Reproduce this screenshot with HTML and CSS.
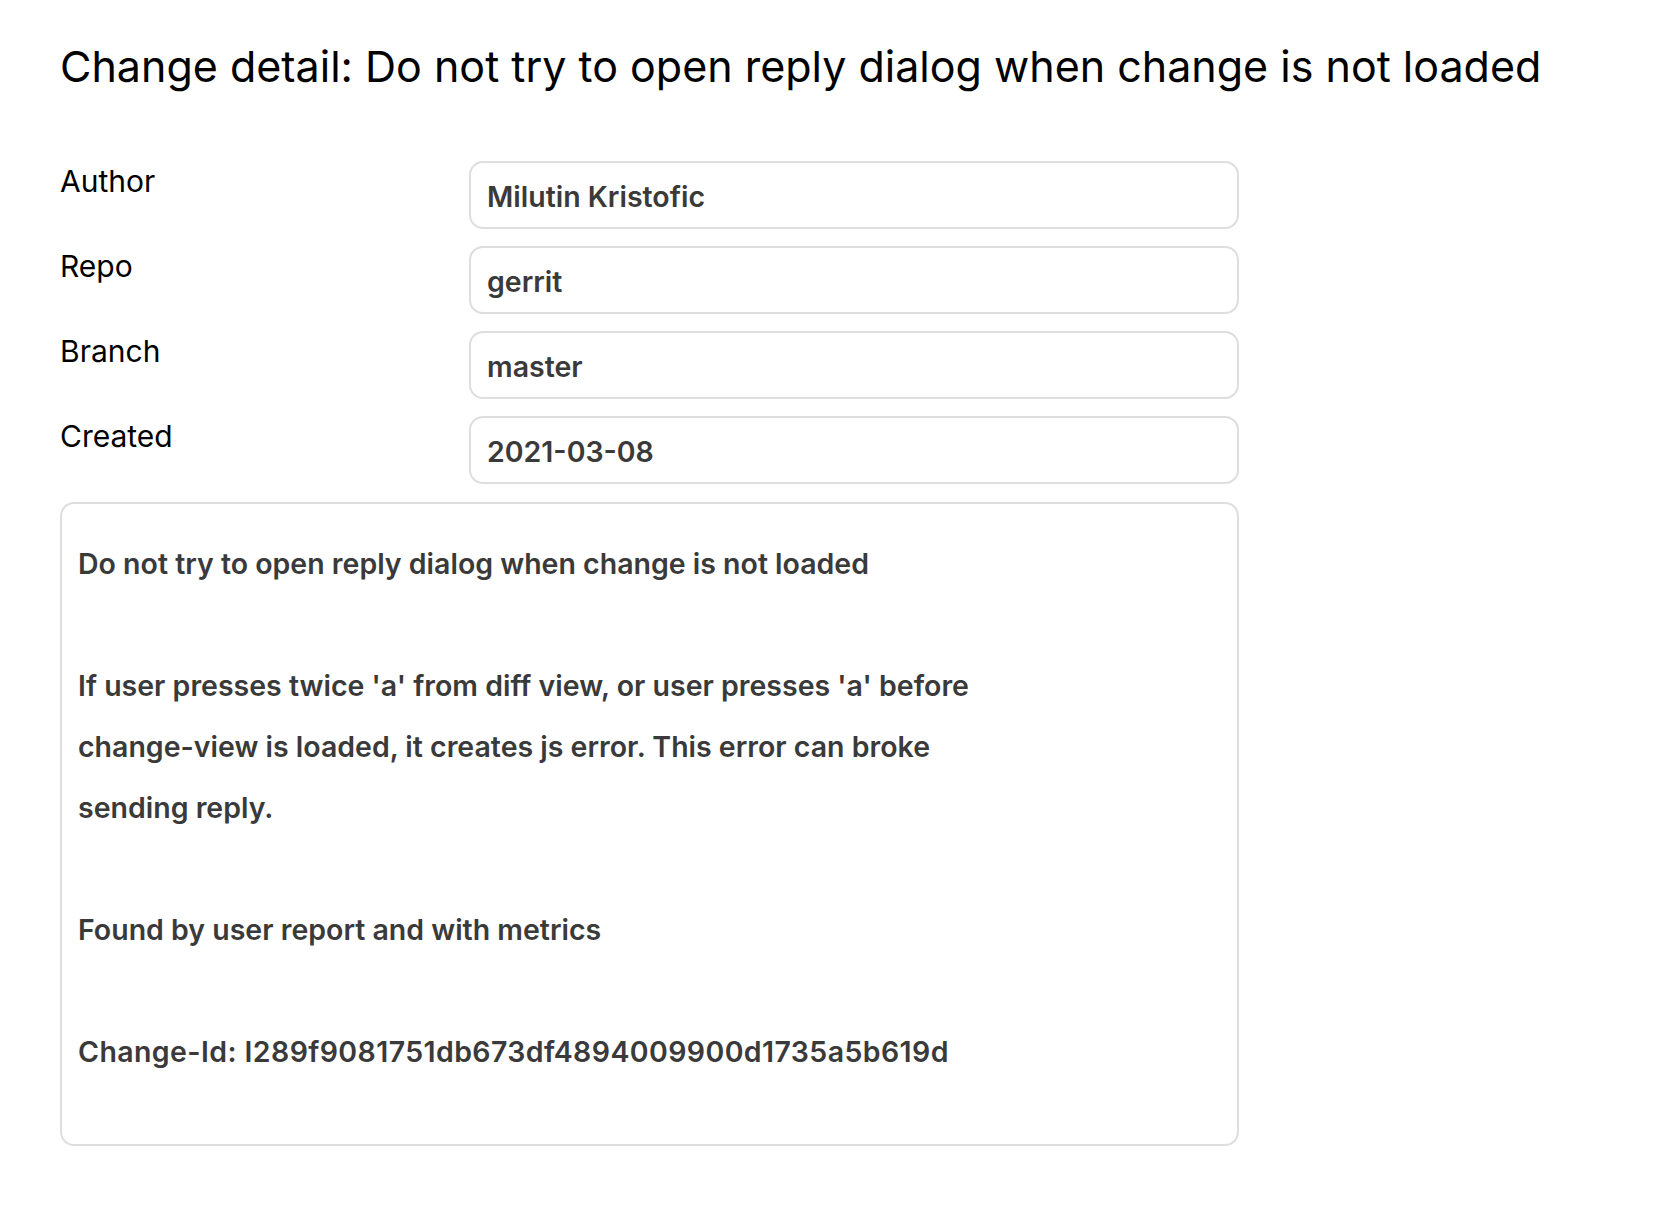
FILE: index.html
```html
<!DOCTYPE html>
<html lang="en">
<head>
<meta charset="utf-8">
<title>Change detail</title>
<link rel="stylesheet" href="styles.css">
</head>
<body>
<main class="page">
  <h1 class="title">Change detail: Do not try to open reply dialog when change is not loaded</h1>
  <div class="details">
    <div class="label">Author</div>
    <div class="field">Milutin Kristofic</div>
    <div class="label">Repo</div>
    <div class="field">gerrit</div>
    <div class="label">Branch</div>
    <div class="field">master</div>
    <div class="label">Created</div>
    <div class="field">2021-03-08</div>
    <div class="message">Do not try to open reply dialog when change is not loaded

If user presses twice 'a' from diff view, or user presses 'a' before
change-view is loaded, it creates js error. This error can broke
sending reply.

Found by user report and with metrics

<span class="change-id">Change-Id: I289f9081751db673df4894009900d1735a5b619d</span></div>
  </div>
</main>
</body>
</html>
```
FILE: styles.css
```css
html, body {
  margin: 0;
  padding: 0;
  background: #ffffff;
}

body {
  font-family: Inter, "Liberation Sans", Arial, sans-serif;
  color: #000000;
}

.page {
  padding: 40px 60px 40px 60px;
}

.title {
  margin: 0 0 69px 0;
  font-size: 43px;
  font-weight: 400;
  line-height: normal;
  color: #000000;
}

.details {
  display: grid;
  grid-template-columns: 409px 770px;
  row-gap: 17px;
}

.label {
  font-size: 30px;
  font-weight: 400;
  padding-top: 2px;
  color: #000000;
}

.field {
  box-sizing: border-box;
  height: 68px;
  border: 2px solid #dedede;
  border-radius: 14px;
  padding: 16px 16px 0 16px;
  font-size: 28.5px;
  font-weight: 600;
  color: #3a3a3a;
}

.message {
  grid-column: 1 / 3;
  box-sizing: border-box;
  height: 644px;
  margin-top: 1px;
  border: 2px solid #dedede;
  border-radius: 14px;
  padding: 29px 16px 0 16px;
  font-size: 28.5px;
  font-weight: 600;
  line-height: 61px;
  color: #3a3a3a;
  white-space: pre-wrap;
}

.change-id {
  letter-spacing: 0.4px;
}
```
